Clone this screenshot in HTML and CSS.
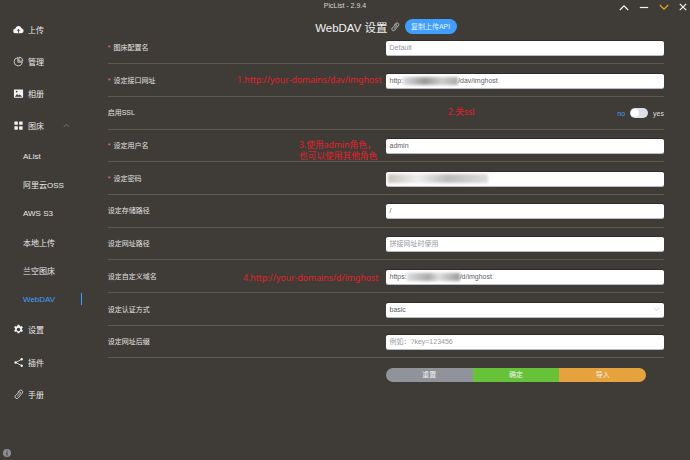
FILE: index.html
```html
<!DOCTYPE html>
<html lang="zh-CN">
<head>
<meta charset="utf-8">
<title>PicList</title>
<link rel="stylesheet" href="styles.css">
</head>
<body>
<div class="app">
  <header class="titlebar">
    <div class="app-title">PicList - 2.9.4</div>
    <div class="win-controls">
      <svg class="win-icon" viewBox="0 0 12 8"><path d="M1 7L6 2l5 5" fill="none" stroke="#f4f4f4" stroke-width="1.4"/></svg>
      <svg class="win-icon" viewBox="0 0 12 8"><path d="M1 4h10" fill="none" stroke="#f4f4f4" stroke-width="1.4"/></svg>
      <svg class="win-icon" viewBox="0 0 12 8"><path d="M1 1l5 5 5-5" fill="none" stroke="#e8a52a" stroke-width="1.4"/></svg>
      <svg class="win-icon close" viewBox="0 0 10 10"><path d="M1 1l8 8M9 1l-8 8" fill="none" stroke="#f4f4f4" stroke-width="1.5"/></svg>
    </div>
  </header>
  <div class="main">
    <aside class="sidebar">
      <nav class="menu">
        <div class="menu-item">
          <svg class="menu-icon" viewBox="0 0 12 12"><path d="M3 10.200a2.600 2.600 0 0 1-.4-5.200A3.500 3.500 0 0 1 9.300 4.500 2.900 2.900 0 0 1 9.200 10.200z" fill="#f2f2f2"/><path d="M6 9.500V5.800M4.500 7.300L6 5.800l1.500 1.500" fill="none" stroke="#3f3c37"/></svg>
          <span>上传</span>
        </div>
        <div class="menu-item">
          <svg class="menu-icon" viewBox="0 0 12 12"><path d="M5.300 1.800a4.500 4.500 0 1 0 4.900 4.900H5.300z" fill="none" stroke="#eee" stroke-width=".8"/><path d="M6.500 1.200a4.400 4.400 0 0 1 4.300 4.300H6.500z" fill="none" stroke="#eee" stroke-width=".8"/></svg>
          <span>管理</span>
        </div>
        <div class="menu-item">
          <svg class="menu-icon" viewBox="0 0 12 12"><rect x="1" y="1.500" width="10" height="9" rx=".5" fill="#f2f2f2"/><path d="M2 9.500l2.500-3 1.700 1.800 1.300-1.300 2.500 2.500z" fill="#3f3c37"/><circle cx="4" cy="4" r=".9" fill="#3f3c37"/></svg>
          <span>相册</span>
        </div>
        <div class="menu-item">
          <svg class="menu-icon" viewBox="0 0 12 12"><g fill="#f2f2f2"><rect x="1.500" y="1.500" width="3.800" height="3.800" rx=".5"/><rect x="6.700" y="1.500" width="3.800" height="3.800" rx=".5"/><rect x="1.500" y="6.700" width="3.800" height="3.800" rx=".5"/><rect x="6.700" y="6.700" width="3.800" height="3.800" rx=".5"/></g></svg>
          <span>图床</span>
          <svg class="chevron" viewBox="0 0 8 5"><path d="M1 4l3-3 3 3" fill="none" stroke="#8f8d88" stroke-width=".8"/></svg>
        </div>
        <div class="sub-item">AList</div>
        <div class="sub-item">阿里云OSS</div>
        <div class="sub-item">AWS S3</div>
        <div class="sub-item">本地上传</div>
        <div class="sub-item">兰空图床</div>
        <div class="sub-item active">WebDAV</div>
        <div class="menu-item">
          <svg class="menu-icon" viewBox="0 0 12 12"><path d="M5 .8h2l.3 1.500 1 .5 1.400-.7 1.100 1.700-1.100 1 0 1.200 1.100 1-1.100 1.700-1.400-.6-1 .6-.3 1.500H5l-.3-1.500-1-.6-1.400.6-1.100-1.700 1.100-1 0-1.200-1.100-1 1.100-1.700 1.400.7 1-.5z" fill="#f2f2f2"/><circle cx="6" cy="6" r="1.800" fill="#3f3c37"/></svg>
          <span>设置</span>
        </div>
        <div class="menu-item">
          <svg class="menu-icon" viewBox="0 0 12 12"><path d="M9.500 2.500L3 6l6.500 3.500" fill="none" stroke="#f2f2f2" stroke-width=".9"/><circle cx="9.500" cy="2.500" r="1.300" fill="#f2f2f2"/><circle cx="2.800" cy="6" r="1.300" fill="#f2f2f2"/><circle cx="9.500" cy="9.500" r="1.300" fill="#f2f2f2"/></svg>
          <span>插件</span>
        </div>
        <div class="menu-item">
          <svg class="menu-icon" viewBox="0 0 12 12"><path d="M5 3.500L7.300 1.600a2 2 0 0 1 2.900 2.700L5.900 9.600a2 2 0 0 1-3.300-2.400L6.800 3.400a.9.900 0 0 1 1.400 1.100L4.500 8" fill="none" stroke="#eee" stroke-width=".8"/></svg>
          <span>手册</span>
        </div>
      </nav>
      <svg class="info" viewBox="0 0 10 10"><circle cx="5" cy="5" r="4" fill="#8a8d92"/><path d="M5.300 2.500v.8M5 4.300v3.200" stroke="#3f3c37" stroke-width="1.100"/></svg>
    </aside>
    <main class="content">
      <div class="heading">
        <h1>WebDAV 设置</h1>
        <svg class="head-link" viewBox="0 0 12 12"><path d="M5 3.500L7.300 1.600a2 2 0 0 1 2.900 2.700L5.900 9.600a2 2 0 0 1-3.300-2.400L6.800 3.400a.9.900 0 0 1 1.400 1.100L4.500 8" fill="none" stroke="#eee" stroke-width=".8"/></svg>
        <span class="api-btn">复制上传API</span>
      </div>
      <form class="form">
        <div class="row"><label class="req">图床配置名</label><div class="input ph">Default</div></div>
        <div class="row"><label class="req">设定接口网址</label><div class="input">http:<span class="smear s1"></span>/dav/imghost</div></div>
        <div class="row"><label>启用SSL</label><div class="switch-wrap"><span class="no">no</span><span class="switch"><span class="knob"></span></span><span class="yes">yes</span></div></div>
        <div class="row"><label class="req">设定用户名</label><div class="input">admin</div></div>
        <div class="row"><label class="req">设定密码</label><div class="input"><span class="smear s2"></span></div></div>
        <div class="row"><label>设定存储路径</label><div class="input">/</div></div>
        <div class="row"><label>设定网址路径</label><div class="input ph">拼接网址时使用</div></div>
        <div class="row"><label>设定自定义域名</label><div class="input">https:<span class="smear s3"></span>/d/imghost</div></div>
        <div class="row"><label>设定认证方式</label><div class="input select">basic<svg class="sel-arrow" viewBox="0 0 8 5"><path d="M1 1l3 3 3-3" fill="none" stroke="#b5b8bf" stroke-width=".7"/></svg></div></div>
        <div class="row"><label>设定网址后缀</label><div class="input ph">例如：?key=123456</div></div>
      </form>
      <div class="actions">
        <span class="act reset">重置</span><span class="act ok">确定</span><span class="act imp">导入</span>
      </div>
    </main>
  </div>
  <div class="note n1">1.http://your-domains/dav/imghost</div>
  <div class="note n2">2.关ssl</div>
  <div class="note n3">3.使用admin角色，<br>也可以使用其他角色</div>
  <div class="note n4">4.http://your-domains/d/imghost</div>
</div>
</body>
</html>
```
FILE: styles.css
```css
* { box-sizing: border-box; }
html, body { margin: 0; height: 100%; }
body {
  background: #3f3c37;
  font-family: "Liberation Sans", "Noto Sans CJK SC", sans-serif;
  color: #eeeeee;
  overflow: hidden;
}
.app { position: relative; width: 690px; height: 460px; display: flex; flex-direction: column; }
.titlebar { height: 13px; flex: none; position: relative; }
.app-title {
  position: absolute; left: 0; right: 0; top: 1px;
  text-align: center; font-size: 7px; line-height: 10px; color: #d6d6d4;
}
.win-controls {
  position: absolute; right: 3px; top: 3px;
  display: flex; align-items: center; gap: 10px;
}
.win-icon { width: 10px; height: 7px; display: block; }
.win-icon.close { width: 8px; height: 8px; }
.main { flex: 1; display: flex; min-height: 0; }
.sidebar { width: 107.700px; flex: none; position: relative; }
.menu { display: flex; flex-direction: column; }
.menu-item {
  height: 32.200px; display: flex; align-items: center;
  padding-left: 13px; font-size: 8px; color: #e8e8e6; position: relative;
}
.menu-icon { width: 11px; height: 11px; margin-right: 4px; flex: none; }
.chevron { width: 7px; height: 5px; margin-left: 19px; }
.sub-item {
  height: 28.700px; display: flex; align-items: center;
  padding-left: 23px; font-size: 8px; color: #e8e8e6; position: relative;
}
.sub-item.active { color: #409eff; }
.sub-item.active::after {
  content: ""; position: absolute; left: 81px; top: 8px;
  width: 1px; height: 12px; background: #409eff;
}
.info { position: absolute; left: 2px; bottom: 2px; width: 10px; height: 10px; }
.content { flex: 1; padding-right: 26px; min-width: 0; }
.heading {
  height: 15px; margin-top: 6px; display: flex;
  align-items: center; justify-content: center;
}
.heading h1 { margin: 0; font-size: 11.500px; font-weight: 400; color: #f2f2f2; white-space: nowrap; }
.head-link { width: 10px; height: 10px; margin: 0 5px 0 2px; }
.api-btn {
  width: 52px; height: 15px; border-radius: 8px; background: #409eff;
  font-size: 7px; line-height: 15px; text-align: center; color: #e8f3ff;
}
.form { margin-top: -2.400px; }
.row {
  height: 32.700px; border-bottom: 1px solid #5c5952;
  display: flex; align-items: flex-start; justify-content: space-between;
  padding-top: 9.400px;
}
.row label {
  font-size: 7px; line-height: 14px; color: #e2e2e0; font-weight: 400;
}
.req::before { content: "*"; color: #f56c6c; margin-right: 3px; font-size: 7px; }
.input {
  width: 278px; height: 14px; background: #fff; border-radius: 2px;
  font-size: 7px; line-height: 14px; padding: 0 3.500px; color: #606266;
  display: flex; align-items: center; white-space: nowrap; position: relative;
  box-shadow: 0 1px 0 #b8bcc4, 0 -1px 0 #2e2c28;
}
.input.ph { color: #96989e; }
.select { justify-content: space-between; }
.sel-arrow { width: 7px; height: 5px; margin-right: 1px; }
.smear { display: inline-block; height: 8px; filter: blur(1.500px); }
.s1 { width: 55px; background: linear-gradient(90deg, #ddd, #999 40%, #ccc 70%, #aaa); }
.s2 { width: 100px; height: 9px; margin-left: -2px; background: linear-gradient(90deg, #c9c5bd, #eee 30%, #bbb 60%, #ddd); }
.s3 { width: 53px; background: linear-gradient(90deg, #ddd, #aaa 40%, #ddd 60%, #999); }
.switch-wrap { display: flex; align-items: center; height: 14px; font-size: 7px; gap: 5px; }
.no { color: #409eff; }
.yes { color: #dcdcda; }
.switch {
  width: 18px; height: 10px; border-radius: 5px; background: #dcdfe6;
  position: relative; display: block; flex: none;
}
.knob {
  position: absolute; left: 1px; top: 1px; width: 8px; height: 8px;
  border-radius: 50%; background: #fff;
}
.actions {
  display: flex; margin: 9.500px 0 0 278.300px; width: 260px; height: 14.500px;
  border-radius: 8px; overflow: hidden;
}
.act {
  flex: 1; text-align: center; font-size: 7px; line-height: 14.500px; color: #f0f0f0;
}
.reset { background: #909399; }
.ok { background: #67c23a; }
.imp { background: #e6a23c; }
.note {
  position: absolute; color: #e3202a; font-size: 8.700px; line-height: 11px;
  font-family: "Noto Sans", "Noto Sans CJK SC", sans-serif; white-space: nowrap;
}
.n1 { left: 237px; top: 75px; }
.n2 { left: 448px; top: 107px; }
.n3 { left: 299px; top: 140px; }
.n4 { left: 243px; top: 273px; }
```
